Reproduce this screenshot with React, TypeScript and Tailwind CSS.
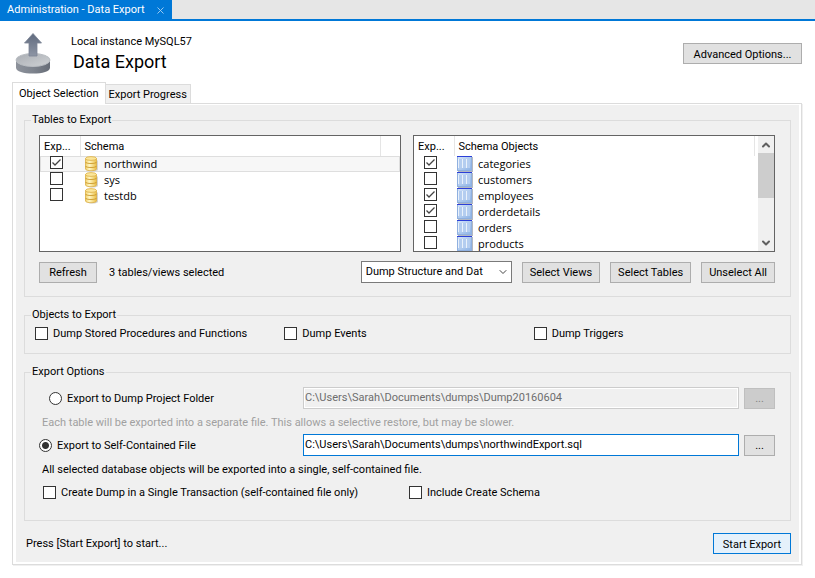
import React, { useState } from 'react';
import { ChevronDown, ChevronUp, X } from 'lucide-react';

interface TreeItem {
  name: string;
  checked: boolean;
}

const SCHEMAS: TreeItem[] = [
  { name: 'northwind', checked: true },
  { name: 'sys', checked: false },
  { name: 'testdb', checked: false },
];

const SCHEMA_OBJECTS: TreeItem[] = [
  { name: 'categories', checked: true },
  { name: 'customers', checked: false },
  { name: 'employees', checked: true },
  { name: 'orderdetails', checked: true },
  { name: 'orders', checked: false },
  { name: 'products', checked: false },
];

const ExportIcon = () => (
  <svg width="36" height="42" viewBox="0 0 36 42" aria-hidden="true">
    <defs>
      <linearGradient id="side" x1="0" x2="1">
        <stop offset="0" stopColor="#8d929b" />
        <stop offset="0.5" stopColor="#7e848e" />
        <stop offset="1" stopColor="#666c76" />
      </linearGradient>
      <linearGradient id="lid" x1="0" x2="1" y2="1">
        <stop offset="0" stopColor="#a9adb3" />
        <stop offset="1" stopColor="#cfd2d5" />
      </linearGradient>
      <linearGradient id="arrow" x1="0" x2="0" y1="0" y2="1">
        <stop offset="0" stopColor="#606a7e" />
        <stop offset="1" stopColor="#8d95a4" />
      </linearGradient>
    </defs>
    <path d="M1 27v7.500c0 4 7.500 6 17 6s17-2 17-6V27z" fill="url(#side)" />
    <ellipse cx="18" cy="27" rx="17" ry="6.500" fill="url(#lid)" stroke="#b9bdc2" strokeWidth="1" />
    <path d="M18 0.500 26.500 10H22v13h-8V10H9.500z" fill="url(#arrow)" stroke="#7b8494" strokeWidth="0.800" />
  </svg>
);

const SchemaIcon = () => (
  <svg width="16" height="16" viewBox="0 0 16 16" className="block" aria-hidden="true">
    <defs>
      <linearGradient id="gold" x1="0" x2="1">
        <stop offset="0" stopColor="#f3d26c" />
        <stop offset="0.350" stopColor="#fff6c4" />
        <stop offset="1" stopColor="#eabf45" />
      </linearGradient>
    </defs>
    <path d="M4 14c2 2 9 2 11 0V5l-1-1z" fill="#d4d4d4" />
    <path d="M2.500 2.500v10.500c0 2.300 11 2.300 11 0V2.500z" fill="url(#gold)" stroke="#dcae45" strokeWidth="0.800" />
    <path d="M2.500 6c0 2 11 2 11 0M2.500 10c0 2 11 2 11 0" fill="none" stroke="#cc9a2c" strokeWidth="0.900" />
    <ellipse cx="8" cy="2.500" rx="5.500" ry="1.900" fill="#fbe69a" stroke="#dcae45" strokeWidth="0.800" />
  </svg>
);

const TableIcon = () => (
  <svg width="16" height="16" viewBox="0 0 16 16" className="block" aria-hidden="true">
    <defs>
      <linearGradient id="grid" x1="0" y1="0" x2="1" y2="1">
        <stop offset="0" stopColor="#d3e3f8" />
        <stop offset="1" stopColor="#8fb4e6" />
      </linearGradient>
    </defs>
    <rect x="1" y="1" width="15" height="15" fill="#b4b8c0" />
    <rect width="15" height="15" fill="#8fb0e0" />
    <rect x="1" y="1" width="13" height="13" fill="url(#grid)" />
    <rect width="15" height="1" fill="#2b3fd8" />
    <path d="M2 3h3v9H2zM6 3h3v9H6zM10 3h3v9h-3z" fill="#b4cdf0" />
    <path d="M5.500 3v9M9.500 3v9M1.500 3v9" stroke="#e9f1fb" strokeWidth="1" />
  </svg>
);

interface CheckProps {
  label: string;
  defaultChecked?: boolean;
  hideLabel?: boolean;
}

const Check: React.FC<CheckProps> = ({ label, defaultChecked, hideLabel }) => (
  <label className="flex items-center gap-[5px]">
    <span className="grid shrink-0">
      <input
        type="checkbox"
        aria-label={label}
        defaultChecked={defaultChecked}
        className="peer col-start-1 row-start-1 size-[13px] appearance-none border border-[#333] bg-white"
      />
      <svg
        viewBox="0 0 13 13"
        className="pointer-events-none invisible col-start-1 row-start-1 size-[13px] peer-checked:visible"
        aria-hidden="true"
      >
        <path d="M2.500 6.500 5 9l5.500-5.500" fill="none" stroke="#444" strokeWidth="1.300" />
      </svg>
    </span>
    {!hideLabel && <span className="pt-px">{label}</span>}
  </label>
);

interface RadioProps {
  label: string;
  checked: boolean;
  onChange: () => void;
}

const Radio: React.FC<RadioProps> = ({ label, checked, onChange }) => (
  <label className="flex items-center gap-[5px]">
    <input
      type="radio"
      name="target"
      checked={checked}
      onChange={onChange}
      className="size-[13px] shrink-0 appearance-none rounded-full border border-[#333] bg-white checked:bg-[radial-gradient(circle,#333_0_3px,#fff_4px)]"
    />
    <span className="pt-px">{label}</span>
  </label>
);

const Button: React.FC<React.ComponentProps<'button'>> = ({ children, ...props }) => (
  <button
    type="button"
    className="h-[21px] shrink-0 border border-[#adadad] bg-[#e1e1e1] px-[7px] pt-[2px] leading-4 whitespace-nowrap disabled:border-[#bfbfbf] disabled:bg-[#ccc] disabled:text-[#838383]"
    {...props}
  >
    {children}
  </button>
);

const Group: React.FC<{ title: string; children: React.ReactNode }> = ({ title, children }) => (
  <fieldset className="min-w-0 border border-[#dcdcdc] pr-[15px] pl-[14px]">
    <legend className="-ml-2 px-px">{title}</legend>
    {children}
  </fieldset>
);

interface TreeProps {
  heading: string;
  items: TreeItem[];
  icon: React.ReactNode;
  selected?: string;
  scroll?: boolean;
}

const Tree: React.FC<TreeProps> = ({ heading, items, icon, selected, scroll }) => (
  <div className="flex h-[117px] min-w-0 flex-1 overflow-hidden border border-[#646464] bg-white">
    <div className="min-w-0 flex-1">
      <table className="w-full table-fixed border-collapse text-left">
        <thead>
          <tr className="h-5">
            <th className="w-10 border-r border-[#e5e5e5] p-0 pt-px pl-1 font-normal">Exp...</th>
            <th className="p-0 pt-px pl-1 font-normal">{heading}</th>
            <th className={scroll ? 'w-1 border-l border-[#e5e5e5] p-0' : 'w-5 border-l border-[#e5e5e5] p-0'} />
          </tr>
        </thead>
        <tbody>
          {items.map((item) => (
            <tr
              key={item.name}
              className={item.name === selected ? 'h-4 bg-[#f7f7f7] shadow-[inset_0_0_0_1px_#dedede]' : 'h-4'}
            >
              <td className="p-0 pl-[10px] align-top">
                <Check label={item.name} defaultChecked={item.checked} hideLabel />
              </td>
              <td className="p-0 pl-[3px]" colSpan={2}>
                <span className="flex h-4 items-center gap-[5px] font-['Open_Sans',sans-serif]">
                  {icon}
                  {item.name}
                </span>
              </td>
            </tr>
          ))}
        </tbody>
      </table>
    </div>
    {scroll && (
      <div className="flex w-4 flex-col items-center bg-[#f0f0f0] text-[#606060]">
        <ChevronUp size={12} strokeWidth={4} className="mt-[3px] mb-[2px]" />
        <div className="h-[45px] w-full bg-[#cdcdcd]" />
        <ChevronDown size={12} strokeWidth={4} className="mt-auto mb-[2px]" />
      </div>
    )}
  </div>
);

const FIELD =
  'h-[22px] min-w-0 flex-1 border border-[#0078d7] bg-white px-px pb-[2px] disabled:border-[#ccc] disabled:bg-[#f0f0f0] disabled:text-[#6d6d6d] disabled:shadow-[inset_0_0_0_1px_#fff]';

const App: React.FC = () => {
  const [target, setTarget] = useState<'folder' | 'file'>('file');

  return (
    <div className="min-h-screen bg-white pb-3 font-['Roboto',sans-serif] text-[11px] leading-4 text-black">
      <div className="flex h-[21px] border-b-2 border-[#0078d7] bg-[#e6e6e6]">
        <div className="flex h-5 items-center gap-[10px] bg-[#0078d7] pr-[6px] pl-[7px] text-white">
          <span>Administration - Data Export</span>
          <button type="button" aria-label="Close tab" className="text-[#a6d0f3]">
            <X size={11} />
          </button>
        </div>
      </div>

      <header className="flex items-start pt-3 pr-[13px] pl-[15px]">
        <ExportIcon />
        <div className="ml-5 flex-1">
          <div className="pt-px">Local instance MySQL57</div>
          <h1 className="ml-[2px] text-lg leading-6">Data Export</h1>
        </div>
        <div className="mt-[10px] grid w-[119px]">
          <Button>Advanced Options...</Button>
        </div>
      </header>

      <main className="mr-[13px] ml-3">
        <div className="mt-[7px] flex items-end" role="tablist">
          <button
            type="button"
            role="tab"
            aria-selected="true"
            className="z-10 -mb-px h-[22px] border border-b-0 border-[#dcdcdc] bg-white px-[6px]"
          >
            Object Selection
          </button>
          <button
            type="button"
            role="tab"
            aria-selected="false"
            className="h-[19px] border border-b-0 border-l-0 border-[#dcdcdc] bg-[#f0f0f0] px-[3px] pt-[2px]"
          >
            Export Progress
          </button>
        </div>

        <div className="border border-[#dcdcdc] bg-white pt-px pr-[2px] pb-[2px] pl-[3px] shadow-[1px_1px_0_#f0f0f0]">
          <div className="flex flex-col gap-[10px] bg-[#f0f0f0] px-2 pt-[7px] pb-2">
            <Group title="Tables to Export">
              <div className="mt-[7px] flex gap-3">
                <Tree heading="Schema" items={SCHEMAS} icon={<SchemaIcon />} selected="northwind" />
                <Tree heading="Schema Objects" items={SCHEMA_OBJECTS} icon={<TableIcon />} scroll />
              </div>
              <div className="mt-[9px] mb-[13px] flex items-center gap-[10px]">
                <div className="grid w-[58px]">
                  <Button>Refresh</Button>
                </div>
                <span className="flex-1 pt-px pl-[2px]">3 tables/views selected</span>
                <span className="grid w-[151px] items-center">
                  <select
                    aria-label="Dump contents"
                    className="col-start-1 row-start-1 h-[22px] appearance-none border border-[#7a7a7a] bg-white pr-5 pl-1"
                  >
                    <option>Dump Structure and Dat</option>
                    <option>Dump Data Only</option>
                    <option>Dump Structure Only</option>
                  </select>
                  <ChevronDown
                    size={12}
                    className="pointer-events-none col-start-1 row-start-1 mr-[3px] justify-self-end text-[#444]"
                  />
                </span>
                <Button>Select Views</Button>
                <Button>Select Tables</Button>
                <Button>Unselect All</Button>
              </div>
            </Group>

            <Group title="Objects to Export">
              <div className="mt-[2px] -mr-2 -ml-1 mb-[11px] grid grid-cols-3">
                <Check label="Dump Stored Procedures and Functions" />
                <Check label="Dump Events" />
                <Check label="Dump Triggers" />
              </div>
            </Group>

            <Group title="Export Options">
              <div className="mt-[7px] flex items-center gap-[5px]">
                <div className="w-[259px] pl-[10px]">
                  <Radio
                    label="Export to Dump Project Folder"
                    checked={target === 'folder'}
                    onChange={() => setTarget('folder')}
                  />
                </div>
                <input
                  type="text"
                  aria-label="Dump project folder"
                  disabled={target !== 'folder'}
                  defaultValue="C:\Users\Sarah\Documents\dumps\Dump20160604"
                  className={FIELD}
                />
                <div className="grid w-[31px]">
                  <Button disabled={target !== 'folder'}>...</Button>
                </div>
              </div>
              <p className="mt-[6px] ml-[3px] text-[#a0a0a0]">
                Each table will be exported into a separate file. This allows a selective restore, but may be slower.
              </p>
              <div className="mt-[3px] flex items-center gap-[5px]">
                <div className="w-[259px]">
                  <Radio
                    label="Export to Self-Contained File"
                    checked={target === 'file'}
                    onChange={() => setTarget('file')}
                  />
                </div>
                <input
                  type="text"
                  aria-label="Self-contained file"
                  disabled={target !== 'file'}
                  defaultValue="C:\Users\Sarah\Documents\dumps\northwindExport.sql"
                  className={FIELD}
                />
                <div className="grid w-[31px]">
                  <Button disabled={target !== 'file'}>...</Button>
                </div>
              </div>
              <p className="mt-[6px] ml-[3px]">
                All selected database objects will be exported into a single, self-contained file.
              </p>
              <div className="mt-[6px] mb-[19px] ml-1 grid grid-cols-2">
                <Check label="Create Dump in a Single Transaction (self-contained file only)" />
                <Check label="Include Create Schema" />
              </div>
            </Group>

            <footer className="mt-[2px] flex items-center justify-between pl-[2px]">
              <span className="pt-px">Press [Start Export] to start...</span>
              <button
                type="button"
                className="h-[21px] border border-[#0078d7] bg-[#e5f1fb] px-[9px] pt-[2px] leading-4"
              >
                Start Export
              </button>
            </footer>
          </div>
        </div>
      </main>
    </div>
  );
};

export default App;
